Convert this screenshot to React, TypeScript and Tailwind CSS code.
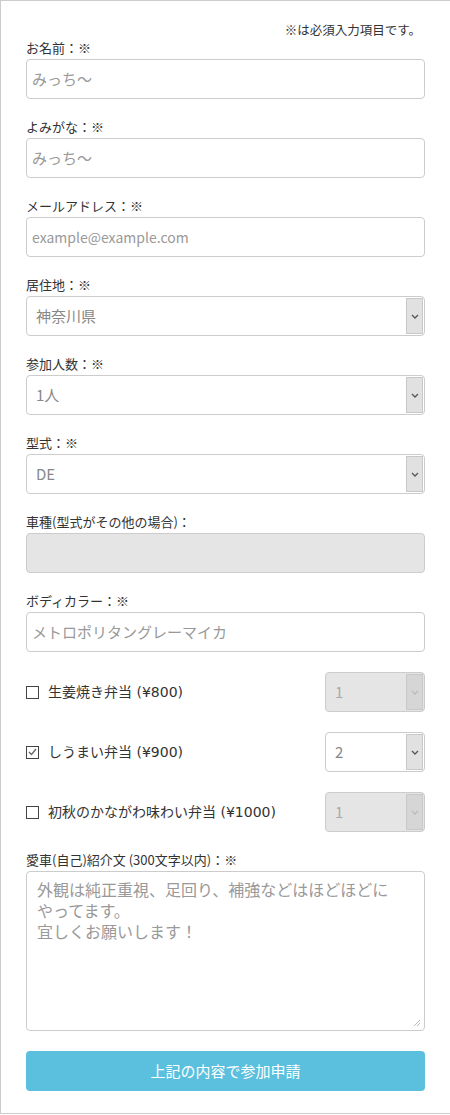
import * as React from "react";

const font = { fontFamily: '"Noto Sans CJK JP", "Noto Sans", sans-serif' };
const wideLatin = { fontFamily: '"DejaVu Sans", "Noto Sans CJK JP", sans-serif' };

function Label({ children }: { children: React.ReactNode }) {
  return <div className="h-[18px] mb-[2px] text-[13px] leading-[18px] text-[#333]">{children}</div>;
}

function Chevron({ color }: { color: string }) {
  return (
    <svg width="8" height="5" viewBox="0 0 8 5" fill="none">
      <path d="M1 1l3 3 3-3" stroke={color} strokeWidth="1.3" />
    </svg>
  );
}

function Select({ value, disabled, className }: { value: string; disabled?: boolean; className?: string }) {
  return (
    <div
      className={`flex h-[40px] rounded-[4px] border border-[#ccc] overflow-hidden ${
        disabled ? "bg-[#e5e5e5]" : "bg-white"
      } ${className ?? ""}`}
    >
      <div className={`flex-1 flex items-center pl-[9px] text-[15px] ${disabled ? "text-[#aaa]" : "text-[#888]"}`}>
        {value}
      </div>
      <div
        className={`w-[17px] my-[1px] mr-[1px] flex items-center justify-center border border-[#c8c8c8] ${
          disabled ? "bg-[#d6d6d6]" : "bg-[#e1e1e1]"
        }`}
      >
        <Chevron color={disabled ? "#bbb" : "#555"} />
      </div>
    </div>
  );
}

function TextInput({ placeholder, disabled, small }: { placeholder?: string; disabled?: boolean; small?: boolean }) {
  return (
    <div
      className={`h-[40px] flex items-center rounded-[4px] border border-[#ccc] pl-[5px] ${
        small ? "text-[14px]" : "text-[15px]"
      } text-[#999] ${disabled ? "bg-[#e5e5e5]" : "bg-white"}`}
    >
      {placeholder}
    </div>
  );
}

function Checkbox({ checked }: { checked?: boolean }) {
  return (
    <span className="w-[13px] h-[13px] border border-[#444] flex items-center justify-center bg-white shrink-0">
      {checked && (
        <svg width="9" height="8" viewBox="0 0 9 8" fill="none">
          <path d="M1 4l2.5 2.5L8 1" stroke="#666" strokeWidth="1.3" />
        </svg>
      )}
    </span>
  );
}

const bento = [
  { name: "生姜焼き弁当 (¥800)", qty: "1", checked: false },
  { name: "しうまい弁当 (¥900)", qty: "2", checked: true },
  { name: "初秋のかながわ味わい弁当 (¥1000)", qty: "1", checked: false },
];

const intro = ["外観は純正重視、足回り、補強などはほどほどに", "やってます。", "宜しくお願いします！"];

export default function App() {
  return (
    <div className="w-[470px] h-[1115px] bg-white" style={font}>
      <div className="border-l border-t border-b border-[#ccc] pl-[25px] pr-[45px] pt-[20px] pb-[22px] text-[#333]">
        <div className="h-[18px] text-right text-[12.5px] leading-[18px] pr-[4px]">※は必須入力項目です。</div>

        <div className="mb-[19px]">
          <Label>お名前：※</Label>
          <TextInput placeholder="みっち～" />
        </div>
        <div className="mb-[19px]">
          <Label>よみがな：※</Label>
          <TextInput placeholder="みっち～" />
        </div>
        <div className="mb-[19px]">
          <Label>メールアドレス：※</Label>
          <TextInput placeholder="example@example.com" small />
        </div>
        <div className="mb-[19px]">
          <Label>居住地：※</Label>
          <Select value="神奈川県" />
        </div>
        <div className="mb-[19px]">
          <Label>参加人数：※</Label>
          <Select value="1人" />
        </div>
        <div className="mb-[19px]">
          <Label>型式：※</Label>
          <Select value="DE" />
        </div>
        <div className="mb-[19px]">
          <Label>車種(型式がその他の場合)：</Label>
          <TextInput disabled />
        </div>
        <div className="mb-[20px]">
          <Label>ボディカラー：※</Label>
          <TextInput placeholder="メトロポリタングレーマイカ" />
        </div>

        <div className="flex flex-col gap-[20px] mb-[19px]">
          {bento.map((b) => (
            <div key={b.name} className="flex items-center h-[40px]">
              <Checkbox checked={b.checked} />
              <span className="ml-[9px] flex-1 text-[14px] text-[#333]" style={wideLatin}>
                {b.name}
              </span>
              <Select value={b.qty} disabled={!b.checked} className="w-[100px]" />
            </div>
          ))}
        </div>

        <div className="mb-[20px]">
          <Label>愛車(自己)紹介文 (300文字以内)：※</Label>
          <div className="relative h-[160px] rounded-[4px] border border-[#ccc] bg-white px-[10px] pt-[7px] text-[16px] text-[#999]">
            {intro.map((line) => (
              <div key={line} className="h-[21px] leading-[21px]">
                {line}
              </div>
            ))}
            <svg className="absolute right-[3px] bottom-[3px]" width="8" height="8" viewBox="0 0 8 8">
              <path d="M7 1L1 7M7 4L4 7" stroke="#bbb" strokeWidth="1" />
            </svg>
          </div>
        </div>

        <button className="w-full h-[40px] rounded-[4px] bg-[#5bc0de] text-white text-[15px]">
          上記の内容で参加申請
        </button>
      </div>
    </div>
  );
}
